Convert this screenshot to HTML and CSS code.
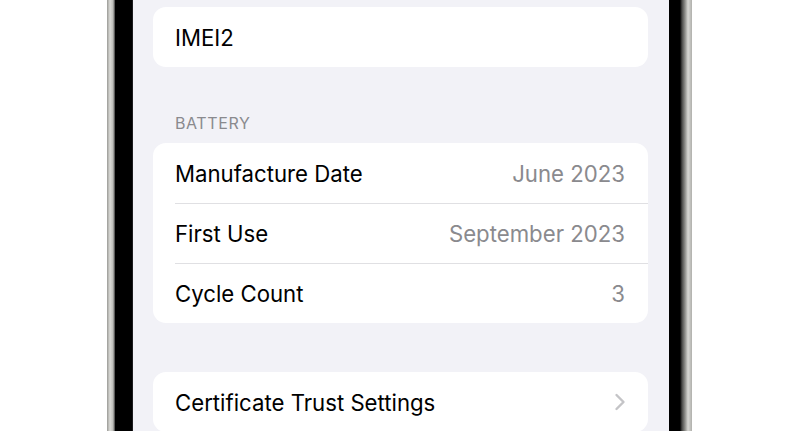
FILE: index.html
```html
<!DOCTYPE html>
<html lang="en">
<head>
  <meta charset="UTF-8">
  <meta name="viewport" content="width=device-width, initial-scale=1.0">
  <title>About</title>
  <link rel="stylesheet" href="styles.css">
</head>
<body>
  <div class="device">
    <div class="bezel">
      <div class="screen">
        <div class="group">
          <div class="row"><span class="label">IMEI2</span></div>
        </div>

        <div class="section-title">BATTERY</div>
        <div class="group">
          <div class="row">
            <span class="label">Manufacture Date</span>
            <span class="value">June 2023</span>
          </div>
          <div class="row">
            <span class="label">First Use</span>
            <span class="value">September 2023</span>
          </div>
          <div class="row">
            <span class="label">Cycle Count</span>
            <span class="value">3</span>
          </div>
        </div>

        <div class="group spaced">
          <div class="row">
            <span class="label">Certificate Trust Settings</span>
            <svg class="chevron" width="12" height="18" viewBox="0 0 12 18">
              <path d="M2.5 2 L9.5 9 L2.5 16" fill="none" stroke="#c4c4c7" stroke-width="2.4" stroke-linecap="round" stroke-linejoin="round"/>
            </svg>
          </div>
        </div>
      </div>
    </div>
  </div>
</body>
</html>
```

FILE: styles.css
```css
body {
  margin: 0;
  background: #fff;
  font-family: Inter, "Noto Sans", sans-serif;
  height: 431px;
  overflow: hidden;
}
.device {
  width: 585px;
  margin-left: 107px;
  height: 431px;
  padding: 0 12px 0 8px;
  box-sizing: border-box;
  background: linear-gradient(to right, #9a9a96 0, #dcdcd8 3px, #bdbdb9 6px, #3a3a3a 8px, #000 9px, #000 calc(100% - 12px), #4a4a48 calc(100% - 10px), #8e8e8a calc(100% - 7px), #d8d8d4 calc(100% - 4px), #b0b0ac 100%);
}
.bezel {
  height: 100%;
  background: #000;
  padding: 0 11px 0 17px;
  box-sizing: border-box;
}
.screen {
  height: 100%;
  background: #f2f2f7;
  padding: 7px 21px 0 20px;
  box-sizing: border-box;
  border-left: 1px solid #1c1c1e;
}
.group {
  background: #fff;
  border-radius: 13px;
  padding-left: 22px;
}
.group.spaced {
  margin-top: 49px;
}
.row {
  height: 60px;
  display: flex;
  align-items: center;
  justify-content: space-between;
  padding-right: 23px;
  font-size: 22.2px;
  color: #000;
  box-sizing: border-box;
}
.row + .row {
  border-top: 1px solid #e0e0e3;
}
.value {
  color: #8a8a8e;
}
.chevron {
  display: block;
  margin-right: -1px;
}
.section-title {
  font-size: 16px;
  color: #8a8a8e;
  letter-spacing: 0.6px;
  padding: 43px 0 7px 22px;
  line-height: 26px;
}
```
